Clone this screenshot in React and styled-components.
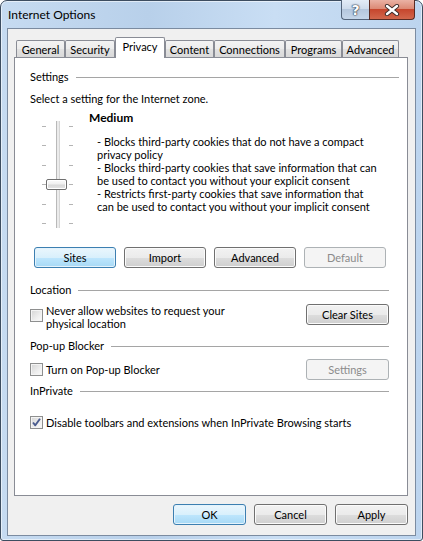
import React from "react";
import styled, { createGlobalStyle } from "styled-components";

const GlobalStyle = createGlobalStyle`
  html, body {
    margin: 0;
    padding: 0;
    background: #ffffff;
  }
  body {
    font-family: Lato, "Noto Sans", sans-serif;
    font-size: 11px;
    color: #000;
  }
`;

const TABS = [
  { label: "General", w: 49 },
  { label: "Security", w: 50 },
  { label: "Privacy", w: 50, active: true },
  { label: "Content", w: 49 },
  { label: "Connections", w: 71 },
  { label: "Programs", w: 57 },
  { label: "Advanced", w: 57 },
];

const App = () => {
  return (
    <>
      <GlobalStyle />
      <Window>
        <TitleBar>
          <Title>Internet Options</Title>
          <Captions>
            <HelpBtn>?</HelpBtn>
            <CloseBtn>
              <svg width="16" height="12" viewBox="0 0 16 12">
                <path d="M3 2 L13 10 M13 2 L3 10" stroke="#3b2a28" strokeWidth="4.2" strokeLinecap="round" />
                <path d="M3 2 L13 10 M13 2 L3 10" stroke="#ffffff" strokeWidth="2.4" strokeLinecap="round" />
              </svg>
            </CloseBtn>
          </Captions>
        </TitleBar>

        <Client>
          <TabStrip>
            {TABS.map((t) => (
              <Tab key={t.label} $w={t.w} $active={t.active}>
                {t.label}
              </Tab>
            ))}
          </TabStrip>

          <Panel>
            <GroupHeader>Settings</GroupHeader>
            <Text $mt={6}>Select a setting for the Internet zone.</Text>

            <ZoneRow>
              <Slider>
                <Ticks>
                  {[0, 1, 2, 3, 4, 5].map((i) => (
                    <Tick key={i} />
                  ))}
                </Ticks>
                <Track />
                <Ticks>
                  {[0, 1, 2, 3, 4, 5].map((i) => (
                    <Tick key={i} />
                  ))}
                </Ticks>
                <Thumb style={{ top: 58 }} />
              </Slider>
              <Describe>
                <Level>Medium</Level>
                <Bullets>
                  - Blocks third-party cookies that do not have a compact
                  <br />
                  privacy policy
                  <br />
                  - Blocks third-party cookies that save information that can
                  <br />
                  be used to contact you without your explicit consent
                  <br />
                  - Restricts first-party cookies that save information that
                  <br />
                  can be used to contact you without your implicit consent
                </Bullets>
              </Describe>
            </ZoneRow>

            <ButtonRow>
              <Button $w={82} $focus>Sites</Button>
              <Button $w={82}>Import</Button>
              <Button $w={82}>Advanced</Button>
              <Button $w={82} disabled>Default</Button>
            </ButtonRow>

            <GroupHeader $mt={14} $mr={10}>Location</GroupHeader>
            <OptionRow $mt={6} $align="flex-start">
              <CheckLabel $align="flex-start">
                <CheckBox $mt={5} />
                <span>
                  Never allow websites to request your
                  <br />
                  physical location
                </span>
              </CheckLabel>
              <Button $w={83}>Clear Sites</Button>
            </OptionRow>

            <GroupHeader $mt={8} $mr={10}>Pop-up Blocker</GroupHeader>
            <OptionRow $mt={5} $align="center">
              <CheckLabel $align="center">
                <CheckBox />
                <span>Turn on Pop-up Blocker</span>
              </CheckLabel>
              <Button $w={83} disabled>Settings</Button>
            </OptionRow>

            <GroupHeader $mt={3} $mr={10}>InPrivate</GroupHeader>
            <OptionRow $mt={17} $align="center">
              <CheckLabel $align="center">
                <CheckBox>
                  <svg width="11" height="11" viewBox="0 0 11 11">
                    <path d="M2 5.5 L4.3 8.3 L9 1.8" fill="none" stroke="#4a5c8f" strokeWidth="1.9" strokeLinejoin="round" />
                  </svg>
                </CheckBox>
                <span>Disable toolbars and extensions when InPrivate Browsing starts</span>
              </CheckLabel>
            </OptionRow>
          </Panel>

          <Footer>
            <Button $w={73} $focus>OK</Button>
            <Button $w={73}>Cancel</Button>
            <Button $w={73}>Apply</Button>
          </Footer>
        </Client>
      </Window>
    </>
  );
};

const Window = styled.div`
  box-sizing: border-box;
  width: 423px;
  height: 541px;
  display: flex;
  flex-direction: column;
  padding: 0 6px 4px;
  border: 1px solid #3d4d60;
  border-radius: 7px 7px 3px 3px;
  background: linear-gradient(90deg, #c6dbf1 0%, #b8d0ea 35%, #c9def4 65%, #bcd4ee 100%);
  box-shadow: inset 0 0 0 1px rgba(255, 255, 255, 0.55);
`;

const TitleBar = styled.div`
  height: 27px;
  display: flex;
  align-items: flex-start;
  justify-content: space-between;
  padding-left: 1px;
`;

const Title = styled.div`
  margin-top: 6px;
  font-size: 12px;
  line-height: 16px;
  color: #000;
`;

const Captions = styled.div`
  display: flex;
  margin: -1px 1px 0 0;
`;

const CaptionBtn = styled.div`
  box-sizing: border-box;
  height: 20px;
  display: flex;
  align-items: center;
  justify-content: center;
  border: 1px solid #53647a;
  border-top: none;
`;

const HelpBtn = styled(CaptionBtn)`
  width: 28px;
  border-right: none;
  border-radius: 0 0 0 4px;
  background: linear-gradient(#e3ecf7 0%, #cfdcec 45%, #b3c6dc 46%, #c5d6ea 100%);
  font-family: "DejaVu Sans", sans-serif;
  font-weight: bold;
  font-size: 14px;
  color: #ffffff;
  text-shadow: 0 0 1px #2b3a4c, 0 0 1px #2b3a4c, 0 0 2px #2b3a4c;
`;

const CloseBtn = styled(CaptionBtn)`
  width: 46px;
  border-color: #5a2b23;
  border-radius: 0 0 4px 0;
  background: linear-gradient(#eab2a4 0%, #dc8a75 45%, #c5442b 46%, #d2674c 100%);
`;

const Client = styled.div`
  flex: 1;
  display: flex;
  flex-direction: column;
  padding: 8px 7px 10px 6px;
  background: #f0f0f0;
  border: 1px solid #7b8ba0;
`;

const TabStrip = styled.div`
  position: relative;
  z-index: 1;
  height: 21px;
  margin: 0 0 -1px 2px;
  display: flex;
  align-items: flex-end;
`;

const Tab = styled.div`
  box-sizing: border-box;
  flex-shrink: 0;
  width: ${(p) => p.$w}px;
  height: ${(p) => (p.$active ? 21 : 17)}px;
  margin-bottom: ${(p) => (p.$active ? 0 : 1)}px;
  padding-bottom: ${(p) => (p.$active ? 3 : 0)}px;
  display: flex;
  align-items: center;
  justify-content: center;
  border: 1px solid #898c95;
  border-bottom: none;
  border-radius: 2px 2px 0 0;
  background: ${(p) =>
    p.$active
      ? "#ffffff"
      : "linear-gradient(#f3f3f3 0%, #ececec 50%, #e2e2e2 51%, #d9d9d9 100%)"};
  white-space: nowrap;
`;

const Panel = styled.div`
  flex: 1;
  display: flex;
  flex-direction: column;
  padding: 11px 8px 0 15px;
  background: #ffffff;
  border: 1px solid #898c95;
`;

const GroupHeader = styled.div`
  display: flex;
  align-items: center;
  gap: 7px;
  margin-top: ${(p) => p.$mt || 0}px;
  margin-right: ${(p) => p.$mr || 0}px;
  line-height: 16px;
  white-space: nowrap;

  &::after {
    content: "";
    flex: 1;
    height: 1px;
    margin-top: 1px;
    background: #a5a5a5;
  }
`;

const Text = styled.div`
  margin-top: ${(p) => p.$mt || 0}px;
  line-height: 16px;
`;

const ZoneRow = styled.div`
  display: flex;
  margin-top: 3px;
`;

const Slider = styled.div`
  position: relative;
  flex-shrink: 0;
  width: 31px;
  height: 107px;
  margin: 11px 0 0 12px;
  display: grid;
  grid-template-columns: 4px 1fr 4px;
`;

const Ticks = styled.div`
  display: flex;
  flex-direction: column;
  justify-content: space-between;
  padding: 5px 0 4px;
`;

const Tick = styled.span`
  height: 1px;
  background: #b4b4b4;
`;

const Track = styled.div`
  justify-self: center;
  width: 2px;
  background: #ebebeb;
  border-left: 1px solid #b9b9b9;
  border-right: 1px solid #d6d6d6;
`;

const Thumb = styled.div`
  position: absolute;
  left: 4px;
  box-sizing: border-box;
  width: 21px;
  height: 11px;
  border: 1px solid #6f6f6f;
  border-radius: 2px;
  background: linear-gradient(#fbfbfb 0%, #f0f0f0 45%, #d9d9d9 55%, #e4e4e4 100%);
  box-shadow: inset 0 0 0 1px #ffffff;
`;

const Describe = styled.div`
  margin-left: 16px;
  display: flex;
  flex-direction: column;
`;

const Level = styled.div`
  font-weight: bold;
  font-size: 12px;
  line-height: 16px;
`;

const Bullets = styled.div`
  margin-top: 9px;
  padding-left: 8px;
  line-height: 13px;
  white-space: nowrap;
`;

const ButtonRow = styled.div`
  display: flex;
  gap: 8px;
  margin: 19px 0 0 4px;
`;

const Footer = styled.div`
  display: flex;
  justify-content: flex-end;
  gap: 8px;
  margin-top: 8px;
`;

const Button = styled.button`
  box-sizing: border-box;
  flex-shrink: 0;
  width: ${(p) => p.$w}px;
  height: 21px;
  padding: 0;
  font-family: inherit;
  font-size: 11px;
  color: #000;
  border-radius: 3px;
  border: 1px solid ${(p) => (p.$focus ? "#3c7fb1" : "#707070")};
  background: ${(p) =>
    p.$focus
      ? "linear-gradient(#eaf6fd 0%, #d9f0fc 50%, #bee6fd 51%, #a7d9f5 100%)"
      : "linear-gradient(#f2f2f2 0%, #ebebeb 50%, #dddddd 51%, #cfcfcf 100%)"};
  box-shadow: inset 0 0 0 1px ${(p) => (p.$focus ? "#e4f3fc" : "#fbfbfb")};

  &:disabled {
    color: #8b8b8b;
    border-color: #adb2b5;
    background: #f4f4f4;
    box-shadow: none;
  }
`;

const OptionRow = styled.div`
  display: flex;
  justify-content: space-between;
  align-items: ${(p) => p.$align};
  margin-top: ${(p) => p.$mt}px;
  margin-right: 10px;
`;

const CheckLabel = styled.label`
  display: flex;
  align-items: ${(p) => p.$align};
  gap: 3px;
  line-height: 13px;
  white-space: nowrap;
`;

const CheckBox = styled.span`
  box-sizing: border-box;
  flex-shrink: 0;
  width: 13px;
  height: 13px;
  margin-top: ${(p) => p.$mt || 0}px;
  display: flex;
  align-items: center;
  justify-content: center;
  border: 1px solid #8e8f8f;
  background: linear-gradient(135deg, #d4d4d4 0%, #eeeeee 60%, #fbfbfb 100%);
  box-shadow: inset 0 0 0 1px #f4f4f4;
`;

export default App;
